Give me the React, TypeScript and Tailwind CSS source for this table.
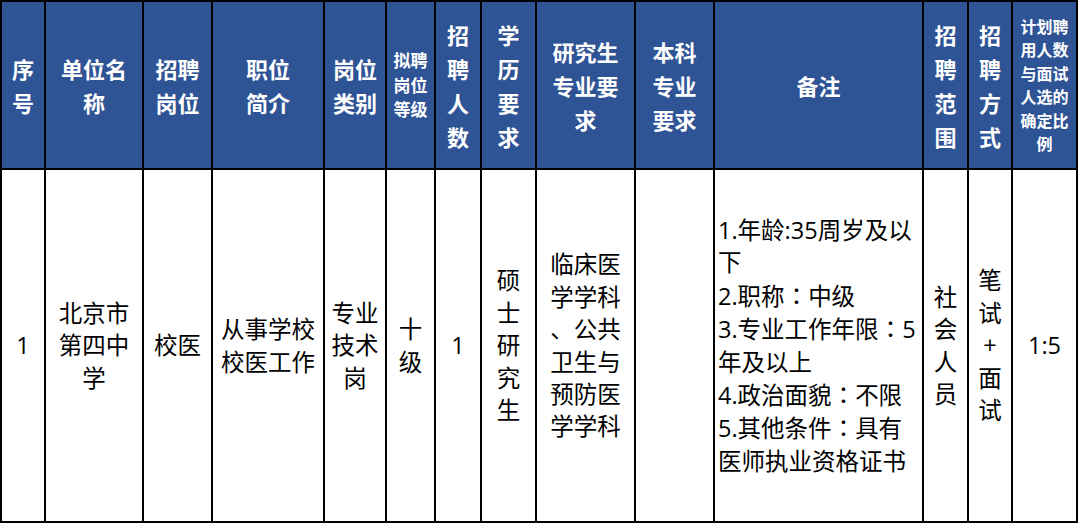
const headers: { lines: string[]; small?: boolean }[] = [
  { lines: ['序', '号'] },
  { lines: ['单位名', '称'] },
  { lines: ['招聘', '岗位'] },
  { lines: ['职位', '简介'] },
  { lines: ['岗位', '类别'] },
  { lines: ['拟聘', '岗位', '等级'], small: true },
  { lines: ['招', '聘', '人', '数'] },
  { lines: ['学', '历', '要', '求'] },
  { lines: ['研究生', '专业要', '求'] },
  { lines: ['本科', '专业', '要求'] },
  { lines: ['备注'] },
  { lines: ['招', '聘', '范', '围'] },
  { lines: ['招', '聘', '方', '式'] },
  { lines: ['计划聘', '用人数', '与面试', '人选的', '确定比', '例'], small: true },
];

const widths = [44, 98, 69, 112, 62, 49, 46, 55, 99, 79, 209, 45, 44, 65];

// one row of data, lines split the same way the source sheet wraps them
const row: { lines: string[]; left?: boolean }[] = [
  { lines: ['1'] },
  { lines: ['北京市', '第四中', '学'] },
  { lines: ['校医'] },
  { lines: ['从事学校', '校医工作'] },
  { lines: ['专业', '技术', '岗'] },
  { lines: ['十', '级'] },
  { lines: ['1'] },
  { lines: ['硕', '士', '研', '究', '生'] },
  { lines: ['临床医', '学学科', '、公共', '卫生与', '预防医', '学学科'] },
  { lines: [] },
  {
    lines: [
      '1.年龄:35周岁及以',
      '下',
      '2.职称：中级',
      '3.专业工作年限：5',
      '年及以上',
      '4.政治面貌：不限',
      '5.其他条件：具有',
      '医师执业资格证书',
    ],
    left: true,
  },
  { lines: ['社', '会', '人', '员'] },
  { lines: ['笔', '试', '+', '面', '试'] },
  { lines: ['1:5'] },
];

// full-width colon sits centred in the sheet, as the TC face draws it
function Line({ text }: { text: string }) {
  const parts = text.split('：');
  return (
    <div className="whitespace-nowrap">
      {parts.map((p, i) => (
        <span key={i}>
          {i > 0 && <span style={{ fontFamily: '"Noto Sans CJK TC", sans-serif' }}>：</span>}
          {p}
        </span>
      ))}
    </div>
  );
}

export default function App() {
  return (
    <div className="w-[1080px] h-[524px] bg-white overflow-hidden">
      <table
        className="border-collapse table-fixed w-[1078px]"
        style={{ fontFamily: '"Open Sans", "Noto Sans CJK SC", sans-serif' }}
      >
        <colgroup>
          {widths.map((w, i) => (
            <col key={i} style={{ width: w }} />
          ))}
        </colgroup>
        <thead>
          <tr className="h-[168px]">
            {headers.map((h, i) => (
              <th
                key={i}
                className={
                  h.small
                    ? i === 5
                      ? 'border-2 border-black bg-[#2f5496] text-white font-bold text-[17px] leading-[24.5px] p-0 align-middle text-center'
                      : 'border-2 border-black bg-[#2f5496] text-white font-bold text-[16px] leading-[23.5px] p-0 align-middle text-center'
                    : 'border-2 border-black bg-[#2f5496] text-white font-bold text-[22px] leading-[34px] p-0 align-middle text-center'
                }
                style={{ fontFamily: '"Noto Sans CJK SC", sans-serif' }}
              >
                {h.lines.map((l, j) => (
                  <div key={j} className="whitespace-nowrap">
                    {l}
                  </div>
                ))}
              </th>
            ))}
          </tr>
        </thead>
        <tbody>
          <tr className="h-[353px]">
            {row.map((c, i) => (
              <td
                key={i}
                className={
                  c.left
                    ? 'border-2 border-black text-black text-[23.5px] leading-[32.4px] align-middle text-left pl-[3px] pr-0'
                    : 'border-2 border-black text-black text-[23.5px] leading-[32.4px] align-middle text-center p-0'
                }
              >
                {c.lines.map((l, j) => (
                  <Line key={j} text={l} />
                ))}
              </td>
            ))}
          </tr>
        </tbody>
      </table>
    </div>
  );
}
